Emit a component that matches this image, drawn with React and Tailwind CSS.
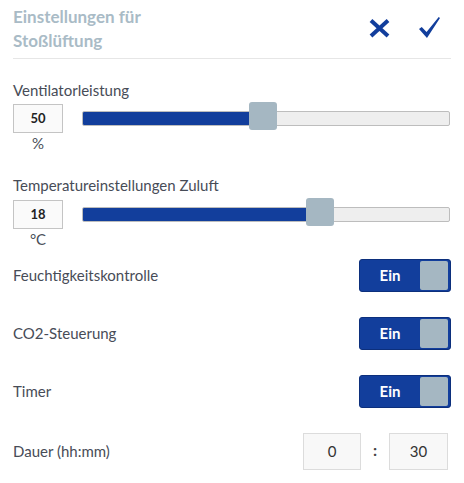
import React, { useState } from "react";

const BLUE = "#123e9c";

const Slider = ({ value, unit, pct }) => (
  <div className="flex">
    <div className="flex flex-col items-center w-[50px]">
      <div className="w-[50px] h-[29px] border border-[#c4c4c4] bg-[#fafafa] flex items-center justify-center text-[13px] font-bold text-[#222]">
        {value}
      </div>
      <div className="h-[20px] leading-[20px] text-[15px] text-[#4a4f59]">{unit}</div>
    </div>
    <div className="flex-1 ml-[19px] mr-[1px] relative h-[29px] flex items-center">
      <div className="w-full h-[15px] bg-[#eeeeee] border border-[#bdbdbd] rounded-[2px] overflow-hidden">
        <div className="h-full bg-[#123e9c]" style={{ width: `${pct}%` }} />
      </div>
      <div
        className="absolute top-[-2px] w-[28px] h-[28px] bg-[#a5b7c2] rounded-[3px]"
        style={{ left: `${pct}%` }}
      />
    </div>
  </div>
);

const Toggle = ({ on }) => (
  <div className="w-[92px] h-[33px] rounded-[3px] bg-[#123e9c] border border-[#0c2f7c] flex items-center pr-[2px]">
    <span className="flex-1 text-center text-white font-bold text-[15px]">{on ? "Ein" : "Aus"}</span>
    <div className="w-[28px] h-[29px] bg-[#a5b7c2] rounded-[2px]" />
  </div>
);

export default function App() {
  const [toggles] = useState({ feuchte: true, co2: true, timer: true });

  return (
    <div
      className="w-[464px] h-[483px] bg-white px-[12px] text-[#474c57]"
      style={{ fontFamily: "Lato, 'Open Sans', sans-serif" }}
    >
      <div className="flex justify-between items-start h-[59px] border-b border-[#e6e6e6] mx-[1px]">
        <h1 className="pt-[5px] text-[17px] leading-[24px] font-bold text-[#a9bbc6]">
          Einstellungen für
          <br />
          Stoßlüftung
        </h1>
        <div className="flex items-center gap-[29px] pt-[17px] pr-[11px]">
          <svg width="21" height="20" viewBox="0 0 21 20">
            <line x1="2" y1="2.5" x2="19" y2="18" stroke={BLUE} strokeWidth="4" />
            <line x1="19" y1="2.5" x2="2" y2="18" stroke={BLUE} strokeWidth="4" />
          </svg>
          <svg width="21" height="21" viewBox="0 0 20 20">
            <path d="M0 11.5 L2.6 9.6 L7.2 14.2 L18.8 0 L20 1 L7.6 20 Z" fill={BLUE} />
          </svg>
        </div>
      </div>

      <div className="mt-[21px] mx-[1px]">
        <div className="h-[20px] leading-[20px] text-[15px] mb-[4px]">Ventilatorleistung</div>
        <Slider value="50" unit="%" pct={45.4} />
      </div>

      <div className="mt-[22px] mx-[1px]">
        <div className="h-[20px] leading-[20px] text-[15px] mb-[5px]">Temperatureinstellungen Zuluft</div>
        <Slider value="18" unit="°C" pct={60.8} />
      </div>

      <div className="mt-[10px] mx-[1px] flex flex-col gap-[25px]">
        <div className="flex justify-between items-center">
          <span className="text-[15px]">Feuchtigkeitskontrolle</span>
          <Toggle on={toggles.feuchte} />
        </div>
        <div className="flex justify-between items-center">
          <span className="text-[15px]">CO2-Steuerung</span>
          <Toggle on={toggles.co2} />
        </div>
        <div className="flex justify-between items-center">
          <span className="text-[15px]">Timer</span>
          <Toggle on={toggles.timer} />
        </div>
        <div className="flex justify-between items-center">
          <span className="text-[15px]">Dauer (hh:mm)</span>
          <div className="flex items-center mr-[3px]">
            <div className="w-[58px] h-[37px] border border-[#dcdcdc] bg-[#f8f8f8] flex items-center justify-center text-[15px] text-[#333]">
              0
            </div>
            <span className="w-[28px] text-center font-bold text-[16px] text-[#444] mb-[4px]">:</span>
            <div className="w-[59px] h-[37px] border border-[#dcdcdc] bg-[#f8f8f8] flex items-center justify-center text-[15px] text-[#333]">
              30
            </div>
          </div>
        </div>
      </div>
    </div>
  );
}
